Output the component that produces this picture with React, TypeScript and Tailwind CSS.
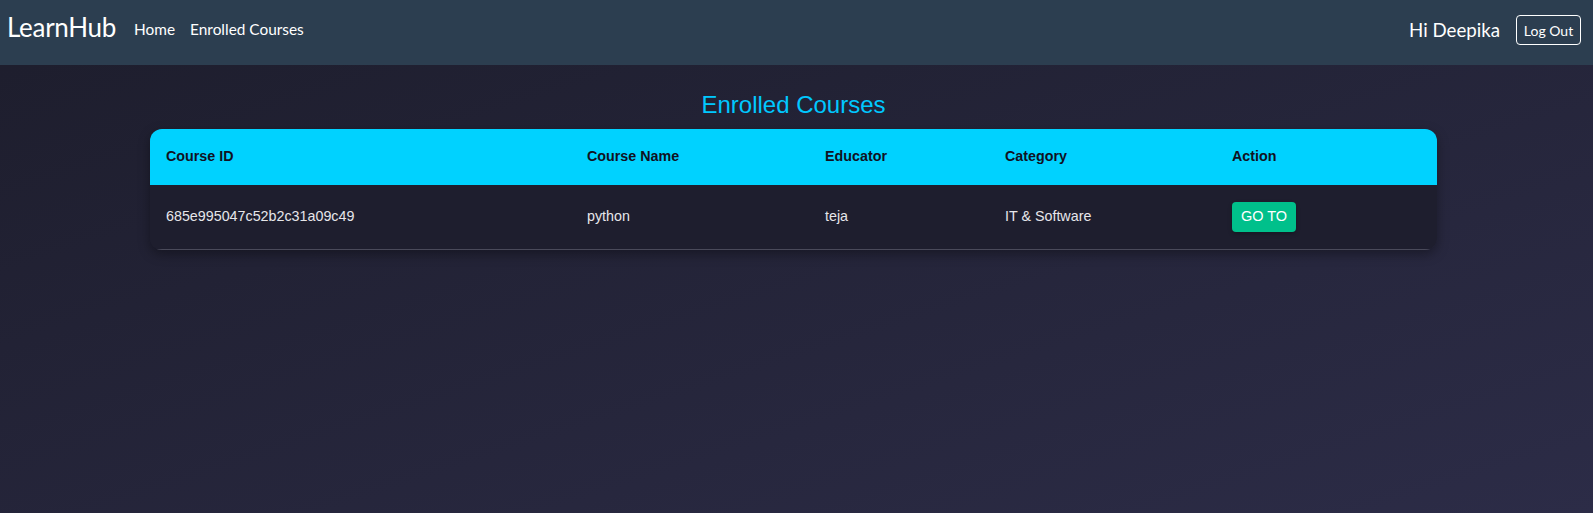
const courses = [
  {
    id: '685e995047c52b2c31a09c49',
    name: 'python',
    educator: 'teja',
    category: 'IT & Software',
  },
];

const NavBar = () => (
  <nav className="flex h-[65px] items-center justify-between bg-[#2c3e50] pb-[5px] pl-[7px] pr-[12px] font-['Lato',sans-serif] text-white">
    <div className="flex items-center">
      <span className="-mt-[5px] text-[26px] leading-none tracking-[-0.3px]">LearnHub</span>
      <a className="ml-[18px] text-[15.4px]">Home</a>
      <a className="ml-[15px] text-[15.4px]">Enrolled Courses</a>
    </div>
    <div className="flex items-center">
      <span className="text-[18.7px]">Hi Deepika</span>
      <button className="ml-[16px] h-[30px] w-[65px] rounded-[4px] border border-white text-[14px]">
        Log Out
      </button>
    </div>
  </nav>
);

export default function App() {
  return (
    <div className="min-h-screen bg-gradient-to-br from-[#1d1d2c] to-[#2c2c47] font-['Liberation_Sans',Arial,sans-serif]">
      <NavBar />
      <main className="pl-[150px] pr-[156px]">
        <h1 className="mt-[21px] mb-[5px] h-[38px] text-center text-[24px] leading-[38px] text-[#00c8ff]">
          Enrolled Courses
        </h1>
        <div className="overflow-hidden rounded-[12px] shadow-[0_4px_12px_rgba(0,0,0,0.35)]">
          <table className="w-full table-fixed border-collapse text-left text-[14.3px]">
            <thead>
              <tr className="h-[56px] bg-[#00d2ff] text-[#111122]">
                <th className="w-[437px] pl-[16px] font-bold">Course ID</th>
                <th className="w-[238px] font-bold">Course Name</th>
                <th className="w-[180px] font-bold">Educator</th>
                <th className="w-[227px] font-bold">Category</th>
                <th className="font-bold">Action</th>
              </tr>
            </thead>
            <tbody>
              {courses.map((c) => (
                <tr key={c.id} className="h-[64px] border-b border-[#4a4a5a] bg-[#1e1e2e] text-[#e6e6ea]">
                  <td className="pl-[16px]">{c.id}</td>
                  <td>{c.name}</td>
                  <td>{c.educator}</td>
                  <td>{c.category}</td>
                  <td>
                    <button className="h-[30px] w-[64px] rounded-[4px] bg-[#00c08b] text-[14.5px] text-white shadow-[0_2px_4px_rgba(0,0,0,0.25)]">
                      GO TO
                    </button>
                  </td>
                </tr>
              ))}
            </tbody>
          </table>
        </div>
      </main>
    </div>
  );
}
